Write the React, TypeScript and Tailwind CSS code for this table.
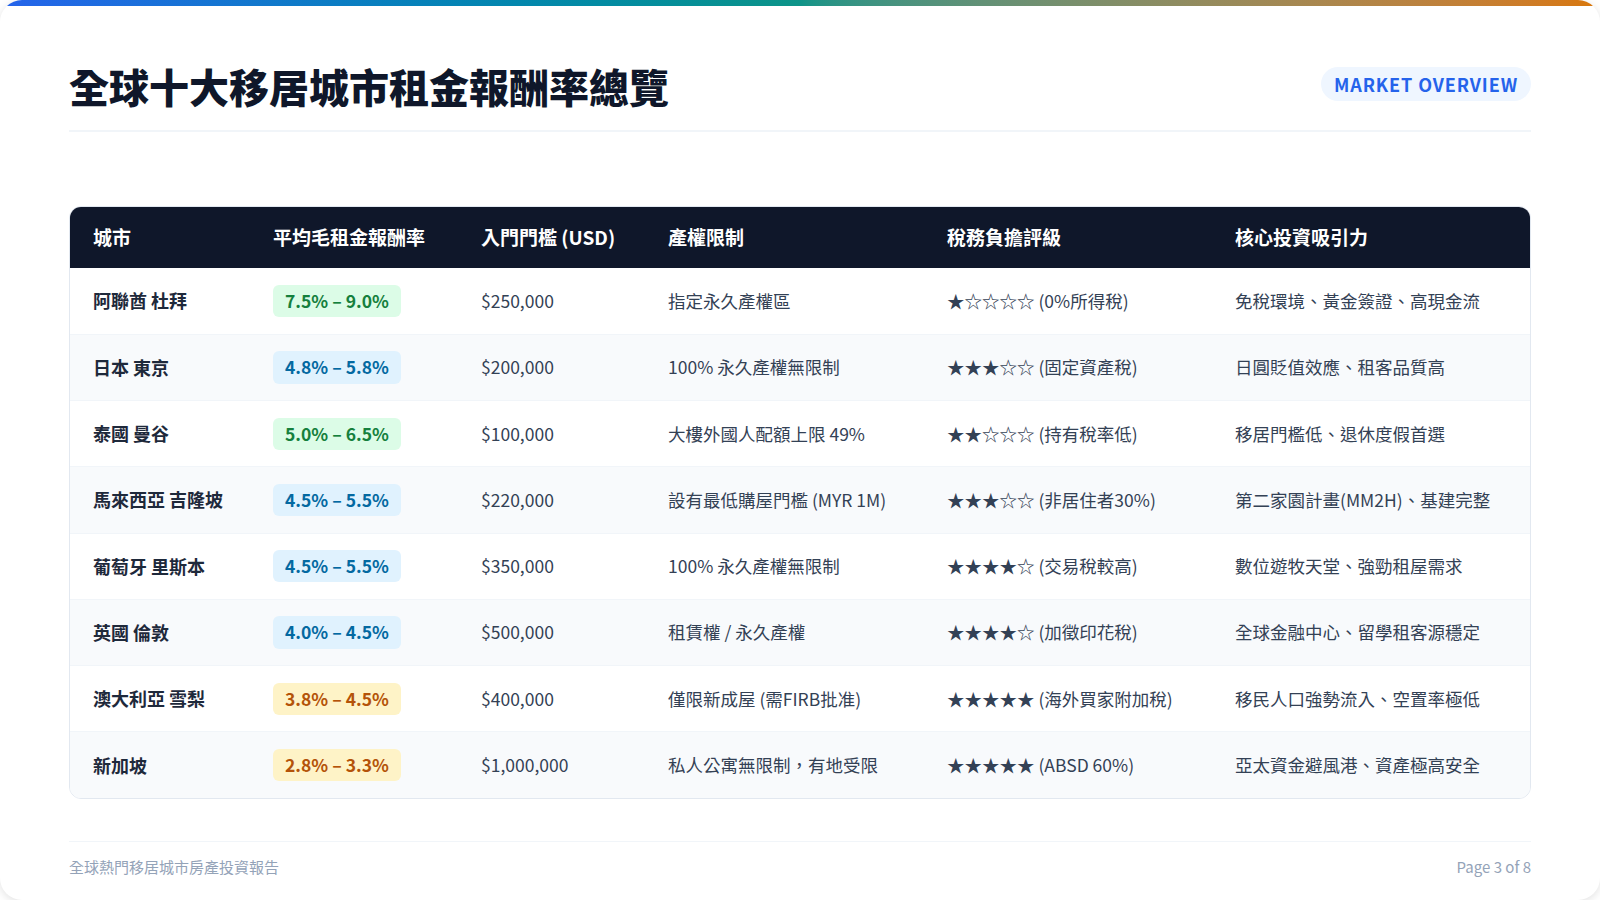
import React from "react";

type Tone = "green" | "blue" | "amber";

const rows: {
  city: string;
  yld: string;
  tone: Tone;
  entry: string;
  prop: string;
  tax: string;
  core: string;
}[] = [
  { city: "阿聯酋 杜拜", yld: "7.5% – 9.0%", tone: "green", entry: "$250,000", prop: "指定永久產權區", tax: "★☆☆☆☆ (0%所得稅)", core: "免稅環境、黃金簽證、高現金流" },
  { city: "日本 東京", yld: "4.8% – 5.8%", tone: "blue", entry: "$200,000", prop: "100% 永久產權無限制", tax: "★★★☆☆ (固定資產稅)", core: "日圓貶值效應、租客品質高" },
  { city: "泰國 曼谷", yld: "5.0% – 6.5%", tone: "green", entry: "$100,000", prop: "大樓外國人配額上限 49%", tax: "★★☆☆☆ (持有稅率低)", core: "移居門檻低、退休度假首選" },
  { city: "馬來西亞 吉隆坡", yld: "4.5% – 5.5%", tone: "blue", entry: "$220,000", prop: "設有最低購屋門檻 (MYR 1M)", tax: "★★★☆☆ (非居住者30%)", core: "第二家園計畫(MM2H)、基建完整" },
  { city: "葡萄牙 里斯本", yld: "4.5% – 5.5%", tone: "blue", entry: "$350,000", prop: "100% 永久產權無限制", tax: "★★★★☆ (交易稅較高)", core: "數位遊牧天堂、強勁租屋需求" },
  { city: "英國 倫敦", yld: "4.0% – 4.5%", tone: "blue", entry: "$500,000", prop: "租賃權 / 永久產權", tax: "★★★★☆ (加徵印花稅)", core: "全球金融中心、留學租客源穩定" },
  { city: "澳大利亞 雪梨", yld: "3.8% – 4.5%", tone: "amber", entry: "$400,000", prop: "僅限新成屋 (需FIRB批准)", tax: "★★★★★ (海外買家附加稅)", core: "移民人口強勢流入、空置率極低" },
  { city: "新加坡", yld: "2.8% – 3.3%", tone: "amber", entry: "$1,000,000", prop: "私人公寓無限制，有地受限", tax: "★★★★★ (ABSD 60%)", core: "亞太資金避風港、資產極高安全" },
];

const toneClass: Record<Tone, string> = {
  green: "bg-[#dcfce7] text-[#15803d]",
  blue: "bg-[#e0f2fe] text-[#0369a1]",
  amber: "bg-[#fef3c7] text-[#b45309]",
};

const headers = ["城市", "平均毛租金報酬率", "入門門檻 (USD)", "產權限制", "稅務負擔評級", "核心投資吸引力"];
const widths = ["180px", "208px", "187px", "279px", "288px", "320px"];

export default function App() {
  return (
    <div
      className="w-[1600px] h-[900px] bg-white"
      style={{ fontFamily: '"Noto Sans CJK TC", "Noto Sans", sans-serif' }}
    >
      <div className="w-[1600px] h-[900px] bg-white rounded-[22px] overflow-hidden flex flex-col shadow-[0_2px_10px_rgba(0,0,0,0.12)]">
        <div className="h-[6px] w-full bg-gradient-to-r from-[#2563eb] via-[#0d9488] to-[#d97706]" />
        <div className="flex-1 flex flex-col px-[69px]">
          <div className="flex items-center justify-between pt-[56px] pb-[20px] border-b-2 border-[#f1f5f9]">
            <h1 className="text-[40px] leading-[48px] font-black text-[#0f172a]">
              全球十大移居城市租金報酬率總覽
            </h1>
            <div className="mb-[4px] h-[34px] px-[13px] rounded-full bg-[#eff6ff] text-[#2563eb] text-[18px] font-bold tracking-[0.9px] flex items-center">
              MARKET OVERVIEW
            </div>
          </div>

          <div className="mt-[74px] rounded-[12px] border border-[#e2e8f0] overflow-hidden">
            <table className="w-full table-fixed border-collapse">
              <colgroup>
                {widths.map((w, i) => (
                  <col key={i} style={{ width: w }} />
                ))}
              </colgroup>
              <thead>
                <tr className="bg-[#0f172a] h-[61px]">
                  {headers.map((h) => (
                    <th key={h} className="text-left px-[23px] text-white text-[19px] font-bold">
                      {h}
                    </th>
                  ))}
                </tr>
              </thead>
              <tbody>
                {rows.map((r, i) => (
                  <tr
                    key={r.city}
                    className={`h-[66.25px] ${i % 2 === 1 ? "bg-[#f8fafc]" : "bg-white"} ${i < rows.length - 1 ? "border-b border-[#f1f5f9]" : ""}`}
                  >
                    <td className="px-[23px] text-[18px] font-bold text-[#1e293b] whitespace-nowrap">{r.city}</td>
                    <td className="px-[23px]">
                      <span className={`inline-block px-[12px] py-[3px] rounded-[6px] text-[17.5px] font-bold whitespace-nowrap ${toneClass[r.tone]}`}>
                        {r.yld}
                      </span>
                    </td>
                    <td className="px-[23px] text-[17.5px] text-[#334155] whitespace-nowrap">{r.entry}</td>
                    <td className="px-[23px] text-[17.5px] text-[#334155] whitespace-nowrap">{r.prop}</td>
                    <td className="px-[23px] text-[17.5px] text-[#334155] whitespace-nowrap">{r.tax}</td>
                    <td className="px-[23px] text-[17.5px] text-[#334155] whitespace-nowrap">{r.core}</td>
                  </tr>
                ))}
              </tbody>
            </table>
          </div>

          <div className="mt-auto mb-[22px] pt-[14px] border-t border-[#f1f5f9] flex items-center justify-between text-[15px] text-[#94a3b8]">
            <span>全球熱門移居城市房產投資報告</span>
            <span>Page 3 of 8</span>
          </div>
        </div>
      </div>
    </div>
  );
}
